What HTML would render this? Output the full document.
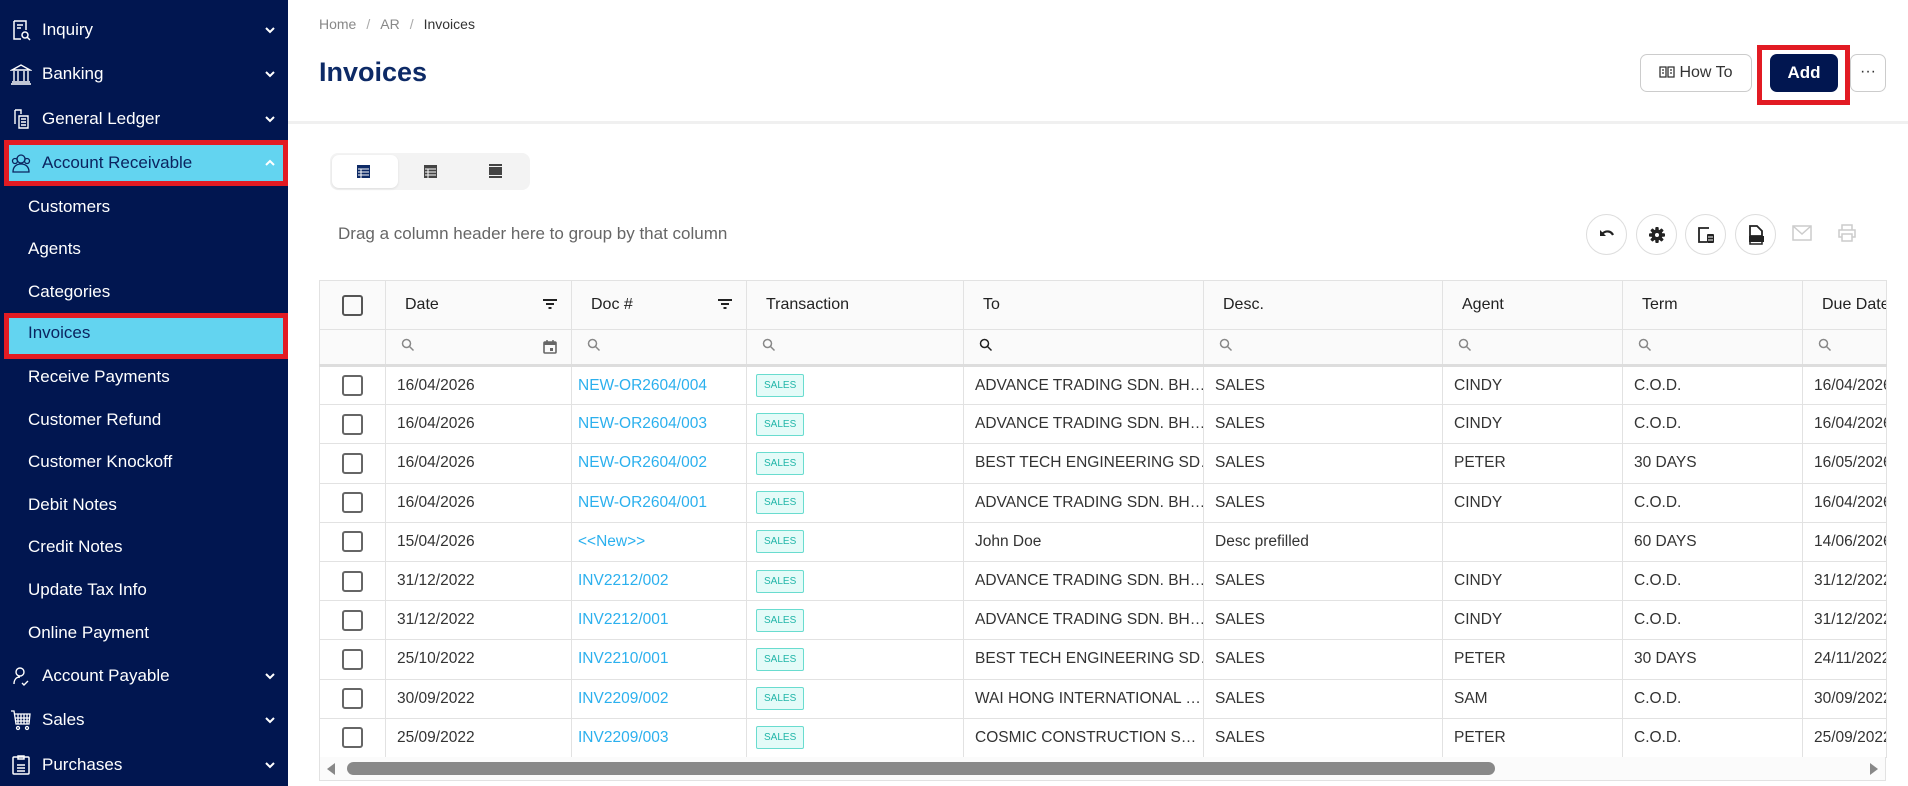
<!DOCTYPE html>
<html><head><meta charset="utf-8">
<style>
*{box-sizing:border-box;margin:0;padding:0}
body{width:1908px;height:786px;overflow:hidden;background:#fff;font-family:"Liberation Sans",sans-serif;position:relative}
.sb{position:absolute;left:0;top:0;width:288px;height:786px;background:#011650}
.it{position:absolute;left:0;width:288px;height:36px;color:#fff;font-size:17px;line-height:36px}
.it.main{padding-left:42px}
.it.sub{padding-left:28px}
.ic{position:absolute;left:10px;top:7px;width:22px;height:22px}
.chev{position:absolute;right:12px;top:12px;width:12px;height:12px}
.hl{position:absolute;left:4px;width:284px;border:5px solid #e21b23;background:#63d4f0}
.bc{position:absolute;left:319px;top:16px;font-size:14px;color:#888}
.bc span{margin:0 10px;color:#aaa}
.bc b{font-weight:normal;color:#333}
h1{position:absolute;left:319px;top:57px;font-size:27px;color:#0d2a66;font-weight:bold}
.sep{position:absolute;left:288px;top:121px;width:1620px;height:3px;background:#f0f0f0}
.btn{position:absolute;border:1px solid #ccc;border-radius:7px;background:#fff;font-size:16px;color:#333;text-align:center}
.circ{position:absolute;top:214px;width:41px;height:41px;border:1px solid #ddd;border-radius:50%;background:#fff}
.circ svg{position:absolute;left:10px;top:10px}
table{position:absolute;left:319px;top:280px;border-collapse:collapse;table-layout:fixed;width:1567px;font-size:15.5px;color:#333}
td,th{border:1px solid #e2e2e2;white-space:nowrap;overflow:hidden;padding-left:11px;text-align:left}
th{height:49px;font-weight:normal;font-size:16px;color:#222;background:#fafafa;position:relative;padding-left:19px}
tr.f td{height:36px;background:#fafafa;border-bottom:3px solid #ddd;padding-left:15px}
tr.d td{height:39.2px}
tr.d td:nth-child(3){padding-left:6px}
tr.d td:nth-child(4){padding-left:9px}
.cb{display:inline-block;width:21px;height:21px;border:2px solid #666;border-radius:3px;vertical-align:middle}
td.c,th.c{padding-left:0 !important;text-align:center}
a{color:#2bb0ee;text-decoration:none}
.tag{display:inline-block;font-size:10px;color:#20b5a8;background:#e4fbf8;border:1px solid #69dccf;padding:5px 7px;border-radius:2px}
.flt{position:absolute;right:14px;top:17px}
</style></head><body>
<div class="sb">
 <div class="hl" style="top:140px;height:46px"></div>
 <div class="hl" style="top:313px;height:46px"></div>
 <div class="it main" style="top:12px"><svg class="ic" viewBox="0 0 22 22" fill="none" stroke="#fff" stroke-width="1.5"><path d="M4 2h12v9M4 2v18h7M7 6h6M7 9h4"/><circle cx="15" cy="16" r="3"/><path d="M17 18l3 3"/></svg>Inquiry<svg class="chev" viewBox="0 0 12 12"><path d="M2 4l4 4 4-4" stroke="#fff" stroke-width="2" fill="none"/></svg></div>
 <div class="it main" style="top:56px"><svg class="ic" viewBox="0 0 22 22" fill="none" stroke="#fff" stroke-width="1.4"><path d="M2 7L11 2l9 5H2zM4 8v10M8 8v10M14 8v10M18 8v10M2 19h18M1 21h20"/></svg>Banking<svg class="chev" viewBox="0 0 12 12"><path d="M2 4l4 4 4-4" stroke="#fff" stroke-width="2" fill="none"/></svg></div>
 <div class="it main" style="top:101px"><svg class="ic" viewBox="0 0 22 22" fill="none" stroke="#fff" stroke-width="1.4"><path d="M5 2h6v4M5 2v14M9 8h9v12H9zM11 11h5M11 14h5M11 17h5"/></svg>General Ledger<svg class="chev" viewBox="0 0 12 12"><path d="M2 4l4 4 4-4" stroke="#fff" stroke-width="2" fill="none"/></svg></div>
 <div class="it main" style="top:145px;color:#0b2460"><svg class="ic" viewBox="0 0 22 22" fill="none" stroke="#0b2460" stroke-width="1.3"><circle cx="11" cy="7" r="4"/><path d="M3 20c0-5 3-8 8-8s8 3 8 8z"/><circle cx="5" cy="9" r="2.5"/><circle cx="17" cy="9" r="2.5"/></svg>Account Receivable<svg class="chev" viewBox="0 0 12 12"><path d="M2 8l4-4 4 4" stroke="#fff" stroke-width="2" fill="none"/></svg></div>
 <div class="it sub" style="top:189px">Customers</div>
 <div class="it sub" style="top:231px">Agents</div>
 <div class="it sub" style="top:274px">Categories</div>
 <div class="it sub" style="top:315px;color:#0b2460">Invoices</div>
 <div class="it sub" style="top:359px">Receive Payments</div>
 <div class="it sub" style="top:402px">Customer Refund</div>
 <div class="it sub" style="top:444px">Customer Knockoff</div>
 <div class="it sub" style="top:487px">Debit Notes</div>
 <div class="it sub" style="top:529px">Credit Notes</div>
 <div class="it sub" style="top:572px">Update Tax Info</div>
 <div class="it sub" style="top:615px">Online Payment</div>
 <div class="it main" style="top:658px"><svg class="ic" viewBox="0 0 22 22" fill="none" stroke="#fff" stroke-width="1.4"><circle cx="10" cy="7" r="4"/><path d="M4 19c0-4 2-7 6-7M12 18l2 2 4-4"/></svg>Account Payable<svg class="chev" viewBox="0 0 12 12"><path d="M2 4l4 4 4-4" stroke="#fff" stroke-width="2" fill="none"/></svg></div>
 <div class="it main" style="top:702px"><svg class="ic" viewBox="0 0 22 22" fill="none" stroke="#fff" stroke-width="1.3"><path d="M1 2h3l2 13h13l1-10H5M8 5v10M11 5v10M14 5v10M17 5v10M5 9h15M5 12h14"/><circle cx="8" cy="19" r="1.5"/><circle cx="17" cy="19" r="1.5"/></svg>Sales<svg class="chev" viewBox="0 0 12 12"><path d="M2 4l4 4 4-4" stroke="#fff" stroke-width="2" fill="none"/></svg></div>
 <div class="it main" style="top:747px"><svg class="ic" viewBox="0 0 22 22" fill="none" stroke="#fff" stroke-width="1.5"><rect x="3" y="3" width="16" height="17" rx="1"/><path d="M8 2h6v3H8zM7 11h8M7 14h8M7 17h8"/></svg>Purchases<svg class="chev" viewBox="0 0 12 12"><path d="M2 4l4 4 4-4" stroke="#fff" stroke-width="2" fill="none"/></svg></div>
</div>

<div class="bc">Home<span>/</span>AR<span>/</span><b>Invoices</b></div>
<h1>Invoices</h1>
<div class="btn" style="left:1640px;top:54px;width:112px;height:38px;line-height:36px"><svg width="16" height="14" viewBox="0 0 16 14" style="vertical-align:-2px;margin-right:4px" fill="none" stroke="#333" stroke-width="1.3"><path d="M1 2h6v10H1zM9 2h6v10H9zM3 5h2M3 8h2M11 5h2M11 8h2"/></svg>How To</div>
<div style="position:absolute;left:1757px;top:45px;width:93px;height:60px;border:5px solid #e21b23"></div>
<div class="btn" style="left:1770px;top:54px;width:68px;height:38px;line-height:38px;background:#011650;color:#fff;border:none;font-weight:bold;font-size:17px">Add</div>
<div class="btn" style="left:1850px;top:54px;width:36px;height:38px;line-height:34px;font-size:16px">···</div>
<div class="sep"></div>

<div style="position:absolute;left:330px;top:153px;width:200px;height:37px;background:#f3f3f3;border-radius:8px"></div>
<div style="position:absolute;left:332px;top:155px;width:66px;height:33px;background:#fff;border-radius:7px;box-shadow:0 1px 2px #ddd"></div>
<svg style="position:absolute;left:357px;top:165px" width="13" height="13" viewBox="0 0 13 13"><rect x="0" y="0" width="13" height="13" fill="#0d2a66"/><path d="M1 4h11M1 7h11M1 10h11M4 4v9" stroke="#fff" stroke-width="1"/></svg>
<svg style="position:absolute;left:424px;top:165px" width="13" height="13" viewBox="0 0 13 13"><rect x="0" y="0" width="13" height="13" fill="#444"/><path d="M1 4h11M1 7h11M1 10h11M4 4v9" stroke="#fff" stroke-width="1"/></svg>
<svg style="position:absolute;left:489px;top:164px" width="13" height="14" viewBox="0 0 13 14"><rect x="0" y="0" width="13" height="2" fill="#444"/><rect x="0" y="3" width="13" height="8" fill="#444"/><rect x="0" y="12" width="13" height="2" fill="#444"/></svg>

<div style="position:absolute;left:338px;top:224px;font-size:17px;color:#666">Drag a column header here to group by that column</div>

<div class="circ" style="left:1586px"><svg width="20" height="20" viewBox="0 0 20 20"><path d="M5 9c4-4 9-3 11 1" fill="none" stroke="#222" stroke-width="2.2"/><path d="M3 5v6h6z" fill="#222"/></svg></div>
<div class="circ" style="left:1636px"><svg width="20" height="20" viewBox="0 0 20 20"><g fill="#222"><rect x="8.3" y="2" width="3.4" height="16" rx="1"/><rect x="8.3" y="2" width="3.4" height="16" rx="1" transform="rotate(45 10 10)"/><rect x="8.3" y="2" width="3.4" height="16" rx="1" transform="rotate(90 10 10)"/><rect x="8.3" y="2" width="3.4" height="16" rx="1" transform="rotate(135 10 10)"/><circle cx="10" cy="10" r="5.5"/></g><circle cx="10" cy="10" r="2" fill="#fff"/></svg></div>
<div class="circ" style="left:1685px"><svg width="20" height="20" viewBox="0 0 20 20"><path d="M13 3H3v14h8" fill="none" stroke="#222" stroke-width="1.8"/><rect x="11" y="9" width="7" height="9" rx="1" fill="#222"/><path d="M12 12h5M12 15h5" stroke="#fff"/></svg></div>
<div class="circ" style="left:1735px"><svg width="20" height="20" viewBox="0 0 20 20"><path d="M4 1h7l5 5v5H4z" fill="none" stroke="#222" stroke-width="1.8"/><rect x="3" y="11" width="15" height="6" fill="#222"/><path d="M4 17v2h12v-2" stroke="#222" stroke-width="1.5" fill="none"/></svg></div>
<svg style="position:absolute;left:1792px;top:225px" width="20" height="16" viewBox="0 0 20 16"><rect x="1" y="1" width="18" height="14" fill="none" stroke="#ccc" stroke-width="1.5"/><path d="M1 1l9 8 9-8" fill="none" stroke="#ccc" stroke-width="1.5"/></svg>
<svg style="position:absolute;left:1838px;top:224px" width="18" height="18" viewBox="0 0 18 18" fill="none" stroke="#ccc" stroke-width="1.5"><path d="M4 6V1h10v5M4 13H1V6h16v7h-3M4 10h10v7H4z"/></svg>

<table>
<colgroup><col style="width:66px"><col style="width:186px"><col style="width:175px"><col style="width:217px"><col style="width:240px"><col style="width:239px"><col style="width:180px"><col style="width:180px"><col style="width:84px"></colgroup>
<tr><th class="c"><span class="cb" style="border-color:#555"></span></th>
<th>Date<svg class="flt" width="14" height="12" viewBox="0 0 14 12"><path d="M0 2h14M3 6h8M5.5 10h3" stroke="#222" stroke-width="2"/></svg></th>
<th>Doc #<svg class="flt" width="14" height="12" viewBox="0 0 14 12"><path d="M0 2h14M3 6h8M5.5 10h3" stroke="#222" stroke-width="2"/></svg></th>
<th>Transaction</th><th>To</th><th>Desc.</th><th>Agent</th><th>Term</th><th>Due Date</th></tr>
<tr class="f"><td></td>
<td style="position:relative"><svg width="14" height="14" viewBox="0 0 14 14"><circle cx="5.5" cy="5.5" r="4" fill="none" stroke="#888" stroke-width="1.5"/><path d="M8.5 8.5l4 4" stroke="#888" stroke-width="1.5"/></svg><svg style="position:absolute;right:14px;top:9px" width="14" height="15" viewBox="0 0 14 15"><rect x="1" y="3" width="12" height="11" rx="1" fill="none" stroke="#666" stroke-width="1.6"/><rect x="1" y="3" width="12" height="3" fill="#666"/><rect x="7" y="9" width="3" height="3" fill="#666"/><path d="M4 1v3M10 1v3" stroke="#666" stroke-width="1.5"/></svg></td>
<td><svg width="14" height="14" viewBox="0 0 14 14"><circle cx="5.5" cy="5.5" r="4" fill="none" stroke="#888" stroke-width="1.5"/><path d="M8.5 8.5l4 4" stroke="#888" stroke-width="1.5"/></svg></td>
<td><svg width="14" height="14" viewBox="0 0 14 14"><circle cx="5.5" cy="5.5" r="4" fill="none" stroke="#888" stroke-width="1.5"/><path d="M8.5 8.5l4 4" stroke="#888" stroke-width="1.5"/></svg></td>
<td><svg width="14" height="14" viewBox="0 0 14 14"><circle cx="5.5" cy="5.5" r="4" fill="none" stroke="#222" stroke-width="1.5"/><path d="M8.5 8.5l4 4" stroke="#222" stroke-width="1.5"/></svg></td>
<td><svg width="14" height="14" viewBox="0 0 14 14"><circle cx="5.5" cy="5.5" r="4" fill="none" stroke="#888" stroke-width="1.5"/><path d="M8.5 8.5l4 4" stroke="#888" stroke-width="1.5"/></svg></td>
<td><svg width="14" height="14" viewBox="0 0 14 14"><circle cx="5.5" cy="5.5" r="4" fill="none" stroke="#888" stroke-width="1.5"/><path d="M8.5 8.5l4 4" stroke="#888" stroke-width="1.5"/></svg></td>
<td><svg width="14" height="14" viewBox="0 0 14 14"><circle cx="5.5" cy="5.5" r="4" fill="none" stroke="#888" stroke-width="1.5"/><path d="M8.5 8.5l4 4" stroke="#888" stroke-width="1.5"/></svg></td>
<td><svg width="14" height="14" viewBox="0 0 14 14"><circle cx="5.5" cy="5.5" r="4" fill="none" stroke="#888" stroke-width="1.5"/><path d="M8.5 8.5l4 4" stroke="#888" stroke-width="1.5"/></svg></td></tr>
<tr class="d"><td class="c"><span class="cb"></span></td><td>16/04/2026</td><td><a>NEW-OR2604/004</a></td><td><span class="tag">SALES</span></td><td>ADVANCE TRADING SDN. BH…</td><td>SALES</td><td>CINDY</td><td>C.O.D.</td><td>16/04/2026</td></tr>
<tr class="d"><td class="c"><span class="cb"></span></td><td>16/04/2026</td><td><a>NEW-OR2604/003</a></td><td><span class="tag">SALES</span></td><td>ADVANCE TRADING SDN. BH…</td><td>SALES</td><td>CINDY</td><td>C.O.D.</td><td>16/04/2026</td></tr>
<tr class="d"><td class="c"><span class="cb"></span></td><td>16/04/2026</td><td><a>NEW-OR2604/002</a></td><td><span class="tag">SALES</span></td><td>BEST TECH ENGINEERING SD…</td><td>SALES</td><td>PETER</td><td>30 DAYS</td><td>16/05/2026</td></tr>
<tr class="d"><td class="c"><span class="cb"></span></td><td>16/04/2026</td><td><a>NEW-OR2604/001</a></td><td><span class="tag">SALES</span></td><td>ADVANCE TRADING SDN. BH…</td><td>SALES</td><td>CINDY</td><td>C.O.D.</td><td>16/04/2026</td></tr>
<tr class="d"><td class="c"><span class="cb"></span></td><td>15/04/2026</td><td><a>&lt;&lt;New&gt;&gt;</a></td><td><span class="tag">SALES</span></td><td>John Doe</td><td>Desc prefilled</td><td></td><td>60 DAYS</td><td>14/06/2026</td></tr>
<tr class="d"><td class="c"><span class="cb"></span></td><td>31/12/2022</td><td><a>INV2212/002</a></td><td><span class="tag">SALES</span></td><td>ADVANCE TRADING SDN. BH…</td><td>SALES</td><td>CINDY</td><td>C.O.D.</td><td>31/12/2022</td></tr>
<tr class="d"><td class="c"><span class="cb"></span></td><td>31/12/2022</td><td><a>INV2212/001</a></td><td><span class="tag">SALES</span></td><td>ADVANCE TRADING SDN. BH…</td><td>SALES</td><td>CINDY</td><td>C.O.D.</td><td>31/12/2022</td></tr>
<tr class="d"><td class="c"><span class="cb"></span></td><td>25/10/2022</td><td><a>INV2210/001</a></td><td><span class="tag">SALES</span></td><td>BEST TECH ENGINEERING SD…</td><td>SALES</td><td>PETER</td><td>30 DAYS</td><td>24/11/2022</td></tr>
<tr class="d"><td class="c"><span class="cb"></span></td><td>30/09/2022</td><td><a>INV2209/002</a></td><td><span class="tag">SALES</span></td><td>WAI HONG INTERNATIONAL …</td><td>SALES</td><td>SAM</td><td>C.O.D.</td><td>30/09/2022</td></tr>
<tr class="d"><td class="c"><span class="cb"></span></td><td>25/09/2022</td><td><a>INV2209/003</a></td><td><span class="tag">SALES</span></td><td>COSMIC CONSTRUCTION S…</td><td>SALES</td><td>PETER</td><td>C.O.D.</td><td>25/09/2022</td></tr>
</table>
<div style="position:absolute;left:319px;top:757px;width:1567px;height:24px;background:#fbfbfb;border-left:1px solid #e2e2e2;border-right:1px solid #e2e2e2;border-bottom:1px solid #e2e2e2"></div>
<svg style="position:absolute;left:327px;top:763px" width="8" height="12"><path d="M8 0v12L0 6z" fill="#888"/></svg>
<div style="position:absolute;left:347px;top:762px;width:1148px;height:13px;background:#898989;border-radius:7px"></div>
<svg style="position:absolute;left:1870px;top:763px" width="8" height="12"><path d="M0 0v12l8-6z" fill="#888"/></svg>
</body></html>
